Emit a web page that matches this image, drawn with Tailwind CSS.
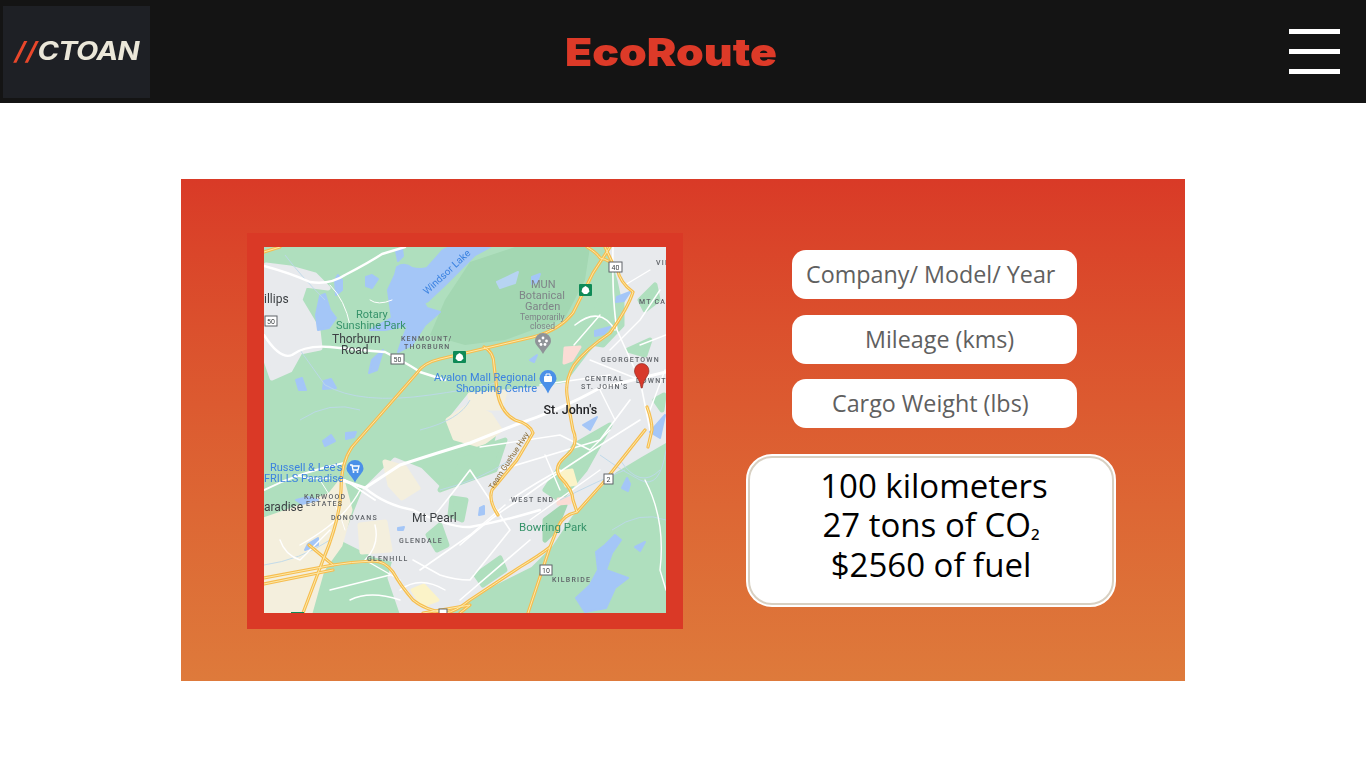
<!DOCTYPE html>
<html>
<head>
<meta charset="utf-8">
<script src="https://cdn.jsdelivr.net/npm/@tailwindcss/browser@4"></script>
</head>
<body class="bg-white">
<div class="h-[768px] w-[1366px] overflow-hidden bg-white font-['Open_Sans',sans-serif]">
  <header class="grid h-[103px] grid-cols-[1fr_auto_1fr] items-center bg-[#141414] pl-[3px] pr-[26px]">
    <div class="flex h-[92px] w-[147px] items-center justify-center bg-[#1e2025]">
      <span class="origin-center scale-x-[1.16] font-['Inter',sans-serif] text-[25px] font-bold italic tracking-[-0.6px] text-[#ebe7d9]"><span class="font-semibold tracking-[0.5px] text-[#e9472b]">//</span>CTOAN</span>
    </div>
    <h1 class="origin-center scale-x-[1.14] font-['Inter',sans-serif] text-[39px] font-black leading-none text-[#dd3a28]">EcoRoute</h1>
    <div class="flex w-[51px] flex-col gap-[15.5px] justify-self-end">
      <div class="h-[4.5px] bg-white"></div>
      <div class="h-[4.5px] bg-white"></div>
      <div class="h-[4.5px] bg-white"></div>
    </div>
  </header>
  <main class="ml-[181px] mt-[76px] flex h-[502px] w-[1004px] bg-gradient-to-b from-[#d93a27] to-[#de7a3b] pl-[66px] pt-[54px]">
    <div class="h-[396px] w-[436px] bg-[#da3926] pl-[17px] pt-[14px]">
      <svg class="blur-[0.35px]" width="402" height="366" viewBox="264 247 402 366" font-family="Roboto, sans-serif">
        <rect x="264" y="247" width="402" height="366" fill="#afdfbe"/>
        <!-- park tone -->
        <path d="M470 262L515 247L590 247L585 280L565 318L505 340L465 345L430 335L445 300Z" fill="#a3d7b2"/>
        <!-- urban -->
        <g stroke-linejoin="round" stroke-width="5">
          <path d="M610 247L666 247L666 440L640 455L615 470L590 495L570 515L550 545L530 565L490 585L460 605L445 613L402 613L390 578L395 560L375 555L345 540L365 490L395 460L420 470L440 490L465 475L490 470L500 430L450 420L470 395L530 390L567 385L590 355L627 313L620 280Z" fill="#e8eaed" stroke="#e8eaed"/>
          <path d="M266 265L290 268L315 275L328 288L305 285L300 300L318 330L320 348L300 352L290 370L272 378L264 355L264 272Z" fill="#e8eaed" stroke="#e8eaed"/>
          <path d="M264 613L264 520L292 510L330 495L342 480L350 510L340 545L322 570L310 613Z" fill="#f4efdd" stroke="#f4efdd"/>
          <path d="M385 462L405 468L418 488L402 498L390 485Z" fill="#f4efdd" stroke="#f4efdd"/>
          <path d="M360 525L385 522L390 550L362 552Z" fill="#f4efdd" stroke="#f4efdd"/>
          <path d="M448 420L470 405L490 415L500 430L480 445L455 438Z" fill="#f4efdd" stroke="#f4efdd"/>
          <path d="M470 395L505 392L500 408L472 408Z" fill="#f4efdd" stroke="#f4efdd"/>
          <path d="M460 455L505 440L495 470L462 482L440 490Z" fill="#afdfbe" stroke="#afdfbe"/>
          <path d="M600 300L622 300L622 325L603 345L585 342Z" fill="#afdfbe" stroke="#afdfbe"/>
          <path d="M545 490L575 445L610 425L585 470L560 500Z" fill="#afdfbe" stroke="#afdfbe"/>
          <path d="M545 520L565 505L555 530L545 540Z" fill="#a3d7b2" stroke="#a3d7b2"/>
          <path d="M452 498L466 500L462 520L450 515Z" fill="#afdfbe" stroke="#afdfbe"/>
          <path d="M428 535L440 525L447 545L437 550Z" fill="#afdfbe" stroke="#afdfbe"/>
          <path d="M476 575L500 558L505 570L483 585Z" fill="#afdfbe" stroke="#afdfbe"/>
          <path d="M640 300L655 285L658 300L645 310ZM628 350L650 340L645 355ZM655 400L664 395L662 410Z" fill="#afdfbe" stroke="#afdfbe"/>
        </g>
        <path d="M565 348L580 347L572 360L564 363Z" fill="#fbdcd5" stroke="#fbdcd5" stroke-width="3" stroke-linejoin="round"/>
        <path d="M558 499L570 498L570 503L558 504Z" fill="#fbdcd5" stroke="#fbdcd5" stroke-width="3" stroke-linejoin="round"/>
        <path d="M560 472L572 470L576 484L566 486Z" fill="#fbf3c8" stroke="#fbf3c8" stroke-width="3" stroke-linejoin="round"/>
        <path d="M412 590L424 585L438 600L422 606Z" fill="#fbf3c8" stroke="#fbf3c8" stroke-width="3" stroke-linejoin="round"/>
        <!-- water -->
        <g fill="#a4c6f7" stroke="#a4c6f7" stroke-width="2" stroke-linejoin="round">
          <path d="M397 267Q405 262 412 268Q420 270 427 268L443 250L450 247L490 247L475 255L465 265L445 285L428 301L424 303L427 308L440 312L425 325L412 345L398 352L402 340L408 325L395 328L385 330L370 330L392 318L390 305L388 290L395 275Z"/>
          <path d="M320 296L325 294L330 310L336 318L329 328L318 330L316 315Z"/>
          <path d="M366 277L372 275L378 279L372 288L366 286Z"/>
          <path d="M335 280L338 275L342 280L342 290L336 295Z"/>
          <path d="M396 251L402 248L403 256L398 261Z"/>
          <path d="M372 360L383 350L377 370L369 373Z"/>
          <path d="M296 380L302 378L306 390L299 390Z"/>
          <path d="M324 381L331 379L336 388L323 389Z"/>
          <path d="M323 441L331 435L335 441L325 446Z"/>
          <path d="M346 433L356 432L354 437L346 439Z"/>
          <path d="M308 544L318 538L318 545L305 550Z"/>
          <path d="M296 500L308 497L318 500L302 504Z"/>
          <path d="M596 552L605 545L615 535L621 540L612 553L606 570L628 578L615 588L606 608L585 612L576 598L590 585L598 570Z"/>
          <path d="M635 547L645 542L640 551Z"/>
          <path d="M622 488L627 478L630 484L628 491Z"/>
          <path d="M617 297L630 292L624 301L616 302Z"/>
          <path d="M595 331L610 327L604 334L595 336Z"/>
          <path d="M532 277L540 274L537 282L532 284Z"/>
          <path d="M497 282L518 272L515 283L500 288Z" fill="#b7d4f2" stroke="#b7d4f2"/>
          <path d="M650 432L665 415L660 438Z"/>
          <path d="M530 360L537 355L534 362Z"/>
          <path d="M583 425L597 417L590 430Z"/>
          <path d="M480 508L484 506L484 514L479 515Z"/>
          <path d="M398 528L404 527L403 530L398 530Z"/>
        </g>
        <!-- thin streams -->
        <g fill="none" stroke="#bcd8ea" stroke-width=".9">
          <path d="M285 255Q300 275 325 300M300 350L325 385Q360 405 430 395T500 380"/>
          <path d="M264 565Q300 560 330 540M560 500Q600 480 625 470M600 455Q620 470 640 480T666 450M440 490Q480 480 510 460"/>
          <path d="M612 530Q640 510 666 520M620 460Q640 490 660 470M300 420Q330 400 360 410M420 430Q460 420 470 400"/>
        </g>
        <!-- white roads -->
        <g fill="none" stroke="#ffffff" stroke-linecap="round" stroke-linejoin="round">
          <path stroke-width="2.4" d="M264 266Q290 273 310 282Q330 285 345 275Q370 262 382 254L405 247"/>
          <path stroke-width="2.4" d="M264 335Q280 360 292 355Q305 345 330 347Q360 350 385 352Q410 365 420 372L445 380"/>
          <path stroke-width="3" d="M342 480L365 488L400 465Q440 452 470 443L515 425Q560 410 600 388L666 372"/>
          <path stroke-width="2.4" d="M365 488Q385 505 413 510Q450 528 470 527Q500 522 540 510"/>
          <path stroke-width="2" d="M264 490Q300 472 344 463M345 480L375 500"/>
          <path stroke-width="1.6" d="M460 545Q500 510 520 500Q560 470 640 420M460 600L530 540M500 470L600 440L630 400M510 500Q540 480 560 470"/>
          <path stroke-width="1.6" d="M613 247Q612 300 617 330Q635 370 640 380L650 430M575 325Q600 305 615 330M540 385L610 375"/>
          <path stroke-width="1.4" d="M640 320L610 350M590 360L640 380M660 290L640 320M665 370L650 410M625 285L650 270M640 345L666 335"/>
          <path stroke-width="1.6" d="M435 515Q455 490 470 470Q490 500 510 530L470 580Q455 580 440 575L413 560M420 570L470 535L505 505"/>
          <path stroke-width="1.4" d="M375 525Q380 545 365 560L400 580M300 545Q345 520 360 490M280 540Q285 555 300 560L330 530M400 590Q420 575 445 590"/>
          <path stroke-width="1.4" d="M645 480Q666 520 660 570L666 590M530 520L600 470M295 475Q310 480 330 478M330 590L390 575M350 600Q370 590 400 600"/>
          <path stroke-width="1.4" d="M480 447L560 435L590 450L610 430M545 455L560 490M600 390L615 420M574 345L600 315"/>
          <path stroke-width="1" d="M330 285Q345 300 350 325M370 300Q378 306 392 300M320 480Q340 510 345 530"/>
        </g>
        <!-- highways -->
        <g fill="none" stroke-linecap="round" stroke-linejoin="round">
          <g stroke="#f6bd4f" stroke-width="3.2">
            <path id="h1" d="M303 613L323 560Q340 520 341 490Q341 463 352 447L417 373Q423 363 440 359L533 337Q560 330 573 313L593 273L610 247"/>
            <path id="h2" d="M587 247Q597 253 600 258Q610 260 617 268Q620 283 633 292Q628 308 610 333Q585 350 574 365Q565 380 567 395Q570 415 573 430Q580 445 565 457Q553 467 560 477Q573 490 573 500L577 512"/>
            <path id="h3" d="M645 430L603 483L577 512Q563 515 558 527L550 547Q540 555 520 567L470 600Q455 612 445 613Q425 610 413 600Q400 585 393 572Q385 561 373 561Q350 562 333 565L264 578"/>
            <path id="h4" d="M550 547L528 613"/>
            <path id="h5" d="M484 347Q494 352 494 365L497 390Q500 412 515 420Q530 424 533 433L517 460L492 490Q488 500 498 515"/>
            <path id="h6" d="M647 407Q652 420 652 430L648 447"/>
            <path id="h7" d="M264 252L280 247M309 545L333 565M264 584L333 570M423 613L470 605L460 613M605 247L612 262"/>
          </g>
          <g stroke="#fde9a8" stroke-width="1">
            <use href="#h1"/><use href="#h2"/><use href="#h3"/><use href="#h4"/><use href="#h5"/><use href="#h6"/><use href="#h7"/>
          </g>
        </g>
        <!-- shields -->
        <g fill="#fff" stroke="#5f6368" stroke-width="1">
          <rect x="265" y="316" width="12" height="10"/><rect x="391" y="354" width="13" height="10"/>
          <rect x="609" y="262" width="13" height="10"/><rect x="604" y="474" width="9" height="10"/>
          <rect x="540" y="565" width="12" height="10"/><rect x="439" y="609" width="8" height="6"/>
        </g>
        <g font-size="7" fill="#3c4043" text-anchor="middle">
          <text x="271" y="324">50</text><text x="397.500" y="362">50</text><text x="615.500" y="270">40</text><text x="608.500" y="482">2</text><text x="546" y="573">10</text>
        </g>
        <!-- parks -->
        <g fill="#0f8a57">
          <rect x="453" y="351" width="13" height="12" rx="1"/><rect x="579" y="284" width="13" height="12" rx="1"/><rect x="291" y="612" width="13" height="3"/>
        </g>
        <path d="M459.500 353L462.500 355L463.500 358.500L461 361L458 361L455.500 358.500L456.500 355ZM585.500 286L588.500 288L589.500 291.500L587 294L584 294L581.500 291.500L582.500 288Z" fill="#fff"/>
        <!-- POI pins -->
        <path d="M543 333a8 8 0 0 1 8 8c0 4-5 7-8 13c-3-6-8-9-8-13a8 8 0 0 1 8-8z" fill="#8f9398"/>
        <g fill="#fff"><circle cx="543" cy="338" r="1.400"/><circle cx="539.500" cy="341" r="1.400"/><circle cx="546.500" cy="341" r="1.400"/><circle cx="541" cy="344.500" r="1.400"/><circle cx="545" cy="344.500" r="1.400"/></g>
        <path d="M548 370a8.500 8.500 0 0 1 8.500 8.500c0 4-5 7-8.500 15c-3.500-8-8.500-11-8.500-15a8.500 8.500 0 0 1 8.500-8.500z" fill="#4a90e8"/>
        <rect x="544" y="376" width="8" height="6" rx="1" fill="#fff"/>
        <path d="M546 376v-2h4v2" fill="none" stroke="#fff"/>
        <path d="M355 460a8.500 8.500 0 0 1 8.500 8.500c0 4-5 7-8.500 14c-3.500-7-8.500-10-8.500-14a8.500 8.500 0 0 1 8.500-8.500z" fill="#4a90e8"/>
        <path d="M350 465h2l1 5h5l1-4h-7" fill="none" stroke="#fff" stroke-width="1.300"/>
        <circle cx="353.500" cy="472" r="1" fill="#fff"/><circle cx="357.500" cy="472" r="1" fill="#fff"/>
        <!-- labels -->
        <g fill="#3c4043" font-size="12">
          <text x="264" y="303">illips</text>
          <text x="332" y="343">Thorburn</text>
          <text x="341" y="354">Road</text>
          <text x="264" y="511">aradise</text>
          <text x="412" y="522">Mt Pearl</text>
          <text x="543.500" y="413.500" font-size="12.500" fill="#202124" font-weight="500">St. John's</text>
        </g>
        <g fill="#36936a" font-size="11">
          <text x="356" y="318">Rotary</text>
          <text x="336" y="329">Sunshine Park</text>
          <text x="519" y="531" font-size="11.500">Bowring Park</text>
        </g>
        <g fill="#7f8488" font-size="11">
          <text x="531" y="288">MUN</text>
          <text x="519" y="299">Botanical</text>
          <text x="525" y="310">Garden</text>
          <text x="520" y="320" font-size="8.500">Temporarily</text>
          <text x="530" y="329" font-size="8.500">closed</text>
        </g>
        <g fill="#3b82e0" font-size="11">
          <text x="434" y="381">Avalon Mall Regional</text>
          <text x="456" y="392">Shopping Centre</text>
          <text x="270" y="471">Russell &amp; Lee's</text>
          <text x="264" y="482">FRILLS Paradise</text>
          <text transform="translate(427 295) rotate(-43)" font-size="10">Windsor Lake</text>
        </g>
        <g fill="#5f6368" font-size="7" letter-spacing="1.200" font-weight="500">
          <text x="401" y="341">KENMOUNT/</text>
          <text x="404" y="349">THORBURN</text>
          <text x="639" y="304">MT CAS</text>
          <text x="601" y="362">GEORGETOWN</text>
          <text x="585" y="381">CENTRAL</text>
          <text x="581" y="389">ST. JOHN'S</text>
          <text x="636" y="383">DOWNT</text>
          <text x="656" y="265">VIL</text>
          <text x="304" y="499">KARWOOD</text>
          <text x="306" y="506">ESTATES</text>
          <text x="331" y="520">DONOVANS</text>
          <text x="399" y="543">GLENDALE</text>
          <text x="367" y="561">GLENHILL</text>
          <text x="511" y="502">WEST END</text>
          <text x="552" y="582">KILBRIDE</text>
        </g>
        <text transform="translate(493 490) rotate(-57)" font-size="8" fill="#8a6d3b">Team Gushue Hwy</text>
        <!-- marker -->
        <path d="M641.700 363.500a7.200 7.200 0 0 1 7.200 7.500c0 5-5 7-6.700 17h-1c-1.700-10-6.700-12-6.700-17a7.200 7.200 0 0 1 7.200-7.500z" fill="#d8392b" stroke="#8f2a20" stroke-width=".7"/>
      </svg>
    </div>
    <div class="ml-[63px] flex w-[370px] flex-col pt-[17px]">
      <div class="ml-[46px] flex h-[49px] w-[285px] items-center rounded-[14px] bg-white pl-[14px] text-[23.3px] text-[#5f6060]">Company/ Model/ Year</div>
      <div class="ml-[46px] mt-[16px] flex h-[49px] w-[285px] items-center rounded-[14px] bg-white pl-[73px] text-[23.3px] text-[#5f6060]">Mileage (kms)</div>
      <div class="ml-[46px] mt-[15px] flex h-[49px] w-[285px] items-center rounded-[14px] bg-white pl-[40px] text-[23.3px] text-[#5f6060]">Cargo Weight (lbs)</div>
      <div class="mt-[26px] h-[153px] w-[370px] rounded-[26px] border-2 border-white bg-white">
        <div class="flex h-full flex-col items-center rounded-[24px] border-2 border-[#d8d0c2] pt-[9px] text-[33px] leading-[38.5px] text-black">
          <div class="ml-[6px]">100 kilometers</div>
          <div>27 tons of CO<span class="text-[25px]">₂</span></div>
          <div>$2560 of fuel</div>
        </div>
      </div>
    </div>
  </main>
</div>
</body>
</html>
